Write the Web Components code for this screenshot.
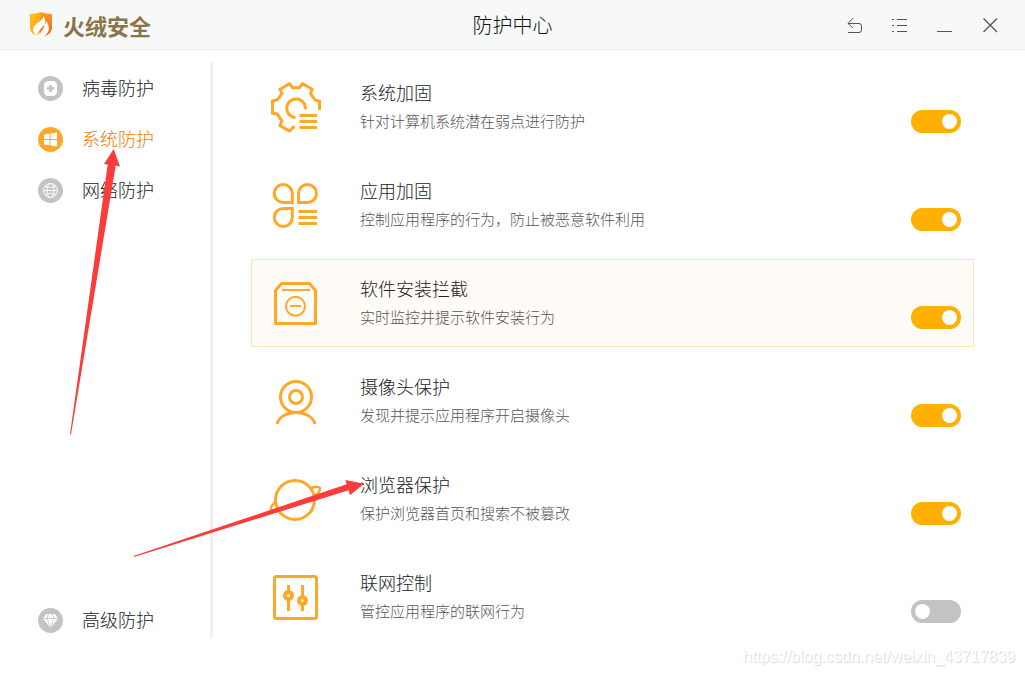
<!DOCTYPE html>
<html lang="zh-CN">
<head>
<meta charset="utf-8">
<meta name="viewport" content="width=device-width, initial-scale=1">
<title>防护中心</title>
<style>
  body { margin: 0; background: #fff; color: #333; font-family: "Noto Sans CJK SC", sans-serif; font-weight: 300; }
</style>
</head>
<body>
<protection-center></protection-center>

<template id="title-bar">
  <style>
    :host { display: grid; grid-template-columns: 1fr auto 1fr; align-items: center; height: 49px; background: #f7f9f9; border-bottom: 1px solid #ebebeb; }
    .brand { display: flex; align-items: center; gap: 10px; padding-left: 29px; color: #8b7448; font-size: 22px; font-weight: 700; line-height: 26px; }
    .brand svg { width: 24px; height: 28px; }
    h1 { margin: 0; font-size: 20px; font-weight: 300; line-height: 28px; color: #111; }
    .tools { display: flex; justify-content: flex-end; padding-right: 12px; }
    button { display: flex; align-items: center; justify-content: center; width: 45px; height: 49px; padding: 1px 0 0; border: 0; background: none; }
    button svg { width: 17px; height: 17px; fill: none; stroke: #555; stroke-width: 1; }
  </style>
  <div class="brand">
    <svg viewBox="0 0 24 28" aria-hidden="true">
      <defs>
        <linearGradient id="l" x1="0" y1="0" x2="1" y2="1"><stop offset="0" stop-color="#ffc21c"/><stop offset="1" stop-color="#ff9d12"/></linearGradient>
        <linearGradient id="r" x1="0" y1="0" x2="0" y2="1"><stop offset="0" stop-color="#ff9a28"/><stop offset="1" stop-color="#f45f10"/></linearGradient>
      </defs>
      <path fill="url(#l)" d="M12 1 Q7 3 1 3 V17 Q1 22 8 25 L12 20Z"/>
      <path fill="url(#r)" d="M12 1 Q17 3 23 3 V17 Q23 22 16 25 L11 26 L12 1Z"/>
      <path fill="#fff" d="M14 5 C15 10 5 12 4 18 C4 22 6 24 9 26 C7 20 12 19 15 14 C16 18 11 20 10 26 L12 27 C17 25 20 21 20 17 C20 14 18 13 18 10 C17 12 17 13 16 13 C17 10 16 7 14 5Z"/>
    </svg>
    <span>火绒安全</span>
  </div>
  <h1>防护中心</h1>
  <div class="tools">
    <button type="button" aria-label="返回"><svg viewBox="0 0 17 17"><path d="M6 1 L1 6.500 L6 11 M1 6.500 H12 Q14.500 6.500 14.500 9 V13 Q14.500 15.500 12 15.500 H1"/></svg></button>
    <button type="button" aria-label="菜单"><svg viewBox="0 0 17 17"><path d="M0 2.500 H2 M5 2.500 H15 M0 8.500 H2 M5 8.500 H15 M0 14.500 H2 M5 14.500 H15"/></svg></button>
    <button type="button" aria-label="最小化"><svg viewBox="0 0 17 17"><path d="M0 14.500 H15"/></svg></button>
    <button type="button" aria-label="关闭"><svg viewBox="0 0 17 17"><path stroke-width="1.300" d="M1.500 1.500 L15 15 M15 1.500 L1.500 15"/></svg></button>
  </div>
</template>

<template id="nav-item">
  <style>
    :host { display: block; }
    a { display: flex; align-items: flex-start; gap: 19px; height: 31px; color: #222; font-size: 18px; line-height: 29px; text-decoration: none; }
    svg { width: 25px; height: 25px; margin-top: 3px; color: #c3c3c3; }
    :host([active]) a { color: #f07800; }
    :host([active]) svg { color: #ffa726; }
  </style>
  <a href="#"><svg viewBox="0 0 25 25" aria-hidden="true"></svg><slot></slot></a>
</template>

<template id="toggle-card">
  <style>
    :host { display: grid; grid-template-columns: 52px 1fr auto; column-gap: 39px; align-items: center; padding: 15px 12px 15px 17px; border: 1px solid transparent; }
    :host([highlighted]) { background: #fffbf6; border-color: #fde6bf; }
    svg { width: 52px; height: 52px; fill: none; stroke: #ffa726; stroke-width: 3; }
    label { display: block; margin-bottom: 2px; font-size: 18px; line-height: 26px; color: #222; }
    p { margin: 0; font-size: 15px; line-height: 28px; color: #555; }
    input { appearance: none; display: flex; align-items: center; align-self: end; box-sizing: border-box; width: 50px; height: 23px; margin: 0 0 2px; padding: 0 4px; border-radius: 12px; background: #c3c3c3; }
    input::before { content: ""; width: 15px; height: 15px; border-radius: 50%; background: #fff; }
    input:checked { justify-content: flex-end; background: #ffb000; }
  </style>
  <svg viewBox="0 0 52 52" aria-hidden="true"></svg>
  <div>
    <label for="toggle"><slot></slot></label>
    <p id="about"><slot name="about"></slot></p>
  </div>
  <input id="toggle" type="checkbox" aria-describedby="about">
</template>

<template id="protection-center">
  <style>
    :host { display: flex; flex-direction: column; min-height: 100vh; position: relative; }
    .body { flex: 1; display: grid; grid-template-columns: 213px 1fr; column-gap: 38px; padding: 13px 51px 0 0; }
    aside { display: flex; flex-direction: column; justify-content: space-between; box-sizing: border-box; margin-bottom: 38px; padding: 10px 0 1px 38px; border-right: 3px solid #efefef; }
    nav { display: flex; flex-direction: column; gap: 20px; }
    main { display: flex; flex-direction: column; gap: 10px; padding-bottom: 34px; }
    .arrows { position: absolute; top: 0; left: 0; width: 400px; height: 600px; fill: #fc3b3b; pointer-events: none; }
    .mark { position: absolute; right: 10px; bottom: 8px; font: 16px/20px "Liberation Sans", sans-serif; color: #fff; text-shadow: 1px 1px 1px #d4d4d4; }
  </style>
  <title-bar></title-bar>
  <div class="body">
    <aside>
      <nav>
        <nav-item icon="virus">病毒防护</nav-item>
        <nav-item icon="system" active>系统防护</nav-item>
        <nav-item icon="network">网络防护</nav-item>
      </nav>
      <nav-item icon="advanced">高级防护</nav-item>
    </aside>
    <main>
      <toggle-card icon="gear" on>系统加固<span slot="about">针对计算机系统潜在弱点进行防护</span></toggle-card>
      <toggle-card icon="apps" on>应用加固<span slot="about">控制应用程序的行为，防止被恶意软件利用</span></toggle-card>
      <toggle-card icon="install" on highlighted>软件安装拦截<span slot="about">实时监控并提示软件安装行为</span></toggle-card>
      <toggle-card icon="camera" on>摄像头保护<span slot="about">发现并提示应用程序开启摄像头</span></toggle-card>
      <toggle-card icon="browser" on>浏览器保护<span slot="about">保护浏览器首页和搜索不被篡改</span></toggle-card>
      <toggle-card icon="control">联网控制<span slot="about">管控应用程序的联网行为</span></toggle-card>
    </main>
  </div>
  <svg class="arrows" viewBox="0 0 400 600" aria-hidden="true">
    <path d="M113.700 149 L120 166.500 L115.700 165.500 L71 434.500 H70 L107.700 164.500 L104 164Z"/>
    <path d="M364 483.700 L350 495.300 L348.700 490.300 L134 557 L133.500 556 L346.700 484.300 L345.300 480Z"/>
  </svg>
  <div class="mark">https://blog.csdn.net/weixin_43717839</div>
</template>

<script>
  const disc = '<circle cx="12.5" cy="12.5" r="12.5" fill="currentColor"/>';
  const navIcons = {
    virus: disc + '<rect x="6" y="5" width="13" height="15" rx="4.5" fill="#fff"/><path d="M12.5 9 V16 M9 12.5 H16" stroke="currentColor" stroke-width="2.600"/>',
    system: disc + '<path fill="#fff" d="M6 7.500 L11.500 6.700 V12 H6Z M12.500 6.500 L19 5.500 V12 H12.500Z M6 13 H11.500 V18.300 L6 17.500Z M12.500 13 H19 V19.500 L12.500 18.500Z"/>',
    network: disc + '<g fill="none" stroke="#fff"><circle cx="12.5" cy="12.500" r="7"/><ellipse cx="12.500" cy="12.500" rx="3.500" ry="7"/><path d="M5.500 12.500 H19.500 M7 8.500 Q12.500 10.500 18 8.500 M7 16.500 Q12.500 14.500 18 16.500"/></g>',
    advanced: disc + '<path fill="#fff" d="M8 6 H17 L20 10.500 L12.500 20 L5 10.500Z"/><path fill="none" stroke="currentColor" stroke-width=".8" d="M5 10.500 H20 M10.500 6 L9 10.500 L12.500 20 L16 10.500 L14.500 6"/>'
  };
  const cardIcons = {
    gear: '<path d="M26 46.300 H24 L20.500 50 L11 44.500 L12.800 40 L8.200 33 L3.500 32.300 V20 L8.200 19 L12.800 12.500 L11 8.300 L20.500 2.700 L23.700 6.700 H30.300 L33.500 2.700 L43.200 8.300 L41.500 12.500 L46 19 L50.500 20.300 V29"/><path d="M26.500 36.500 A9.300 9.300 0 1 1 36.300 28.500"/><path d="M30.500 34.500 H48 M30.500 40.500 H48 M30.500 46.500 H48"/>',
    apps: '<path d="M23.300 23.500 V14.500 A9 9 0 1 0 14.500 23.500Z M29.500 23.500 V14.500 A9 9 0 1 1 38.500 23.500Z M23.300 29.500 H14.500 A9 9 0 1 0 23.300 38.500Z"/><path d="M29.500 32.500 H48 M29.500 38.500 H48 M29.500 44.500 H48"/>',
    install: '<path stroke-linejoin="round" d="M12.500 6.500 H40.500 L46.500 13.500 V46.500 H6.500 V13.500Z"/><path stroke-width="2" d="M13 13 H41 M21 29 H32"/><circle cx="26.500" cy="29.300" r="9.500" stroke-width="2"/>',
    camera: '<circle cx="27" cy="22" r="15.500"/><circle cx="27" cy="22" r="6.500"/><path d="M8 49 C10 41.500 18 37.500 27 37.500 S44 41.500 46 49"/>',
    browser: '<circle cx="26" cy="27" r="19.500"/><path stroke-width="2.500" d="M42 15 Q51 12 51 16 Q50.500 19 45.500 23.500 M6.500 29 Q1 34 2 36.500 Q3 38 9.500 36"/>',
    control: '<rect x="5.500" y="5.500" width="42" height="42" rx="2"/><path d="M19.500 14 V40 M33.500 14 V40"/><circle cx="19.500" cy="24.500" r="3.500" fill="#fff" stroke-width="4"/><circle cx="33.500" cy="29.500" r="3.500" fill="#fff" stroke-width="4"/>'
  };

  class TemplateElement extends HTMLElement {
    constructor() {
      super();
      this.attachShadow({ mode: 'open' })
        .append(document.getElementById(this.localName).content.cloneNode(true));
    }
  }
  class TitleBar extends TemplateElement {}
  class NavItem extends TemplateElement {
    connectedCallback() {
      this.shadowRoot.querySelector('svg').innerHTML = navIcons[this.getAttribute('icon')];
    }
  }
  class ToggleCard extends TemplateElement {
    connectedCallback() {
      this.shadowRoot.querySelector('svg').innerHTML = cardIcons[this.getAttribute('icon')];
      this.shadowRoot.querySelector('input').checked = this.hasAttribute('on');
    }
  }
  class ProtectionCenter extends TemplateElement {}

  customElements.define('title-bar', TitleBar);
  customElements.define('nav-item', NavItem);
  customElements.define('toggle-card', ToggleCard);
  customElements.define('protection-center', ProtectionCenter);
</script>
</body>
</html>
